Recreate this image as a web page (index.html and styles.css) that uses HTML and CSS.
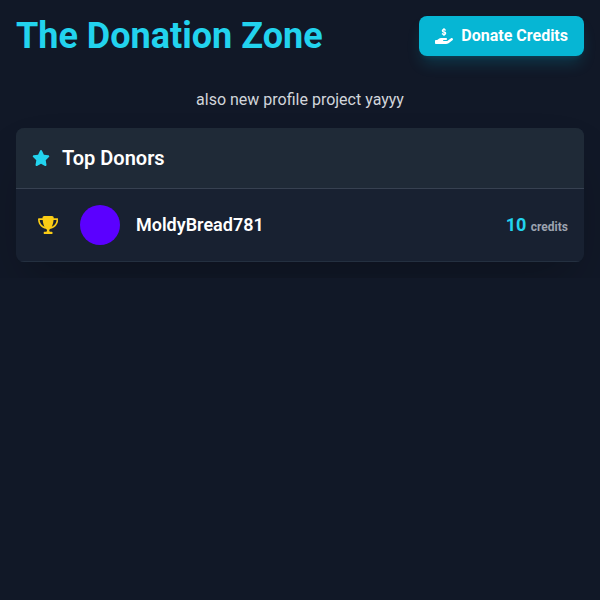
FILE: index.html
```html
<!DOCTYPE html>
<html lang="en">
<head>
  <meta charset="utf-8">
  <meta name="viewport" content="width=device-width, initial-scale=1">
  <title>The Donation Zone</title>
  <link rel="stylesheet" href="styles.css">
</head>
<body>
  <div class="page">
    <header class="page-header">
      <h1 class="page-title">The Donation Zone</h1>
      <button class="donate-button" type="button">
        <svg class="icon" viewBox="0 0 576 512" aria-hidden="true"><path d="M312 24V34.500c6.400 1.200 12.600 2.700 18.200 4.200c12.800 3.400 20.400 16.600 17 29.400s-16.600 20.400-29.400 17c-10.900-2.900-21.100-4.900-30.200-5c-7.300-.1-14.700 1.700-19.400 4.400c-2.100 1.300-3.100 2.400-3.500 3c-.3 .5-.7 1.200-.7 2.800c0 .3 0 .5 0 .6c.2 .2 .9 1.200 3.300 2.600c5.800 3.500 14.400 6.200 27.400 10.100l.9 .3c11.100 3.300 25.900 7.800 37.900 15.300c13.700 8.600 26.100 22.900 26.400 44.900c.3 22.500-11.400 38.900-26.700 48.500c-6.700 4.100-13.900 7-21.300 8.800V232c0 13.300-10.700 24-24 24s-24-10.700-24-24V220.600c-9.500-2.300-18.200-5.300-25.600-7.800c-2.100-.7-4.100-1.400-6-2c-12.600-4.200-19.400-17.800-15.200-30.400s17.800-19.400 30.400-15.200c2.600 .9 5 1.700 7.300 2.500c13.600 4.600 23.400 7.900 33.900 8.300c8 .3 15.100-1.600 19.200-4.100c1.900-1.200 2.800-2.200 3.200-2.900c.4-.6 .9-1.800 .8-4.100l0-.2c0-1 0-2.100-4-4.600c-5.700-3.600-14.300-6.400-27.100-10.300l-1.900-.6c-10.800-3.200-25-7.500-36.400-14.400c-13.500-8.100-26.500-22-26.600-44.100c-.1-22.900 12.900-38.600 27.700-47.400c6.400-3.800 13.300-6.400 20.200-8.200V24c0-13.300 10.700-24 24-24s24 10.700 24 24zM568.200 336.300c13.100 17.800 9.300 42.800-8.500 55.900L433.100 485.500c-23.400 17.200-51.600 26.500-80.700 26.500H192 32c-17.700 0-32-14.300-32-32V416c0-17.700 14.300-32 32-32H68.800l44.900-36c22.700-18.200 50.900-28 80-28H272h16 64c17.700 0 32 14.300 32 32s-14.300 32-32 32H288 272c-8.800 0-16 7.200-16 16s7.200 16 16 16H392.600l119.700-88.200c17.800-13.100 42.800-9.300 55.900 8.500z"/></svg>
        <span>Donate Credits</span>
      </button>
    </header>

    <main>
      <p class="notice">also new profile project yayyy</p>

      <section class="card" aria-labelledby="donors-title">
        <div class="card-header">
          <svg class="icon icon-star" viewBox="0 0 576 512" aria-hidden="true"><path d="M316.900 18C311.600 7 300.400 0 288.100 0s-23.400 7-28.800 18L195 150.300 51.400 171.500c-12 1.800-22 10.200-25.700 21.700s-.7 24.200 7.900 32.700L137.800 329 113.200 474.700c-2 12 3 24.200 12.900 31.300s23 8 33.800 2.300l128.300-68.500 128.300 68.500c10.800 5.700 23.900 4.900 33.800-2.300s14.900-19.300 12.900-31.300L438.500 329 542.700 225.900c8.600-8.500 11.700-21.200 7.900-32.700s-13.700-19.900-25.700-21.700L381.200 150.300 316.900 18z"/></svg>
          <h2 class="card-title" id="donors-title">Top Donors</h2>
        </div>
        <ol class="donors">
          <li class="donor">
            <span class="rank">
              <svg class="icon-trophy" viewBox="0 0 576 512" aria-hidden="true"><path d="M400 0H176c-26.500 0-48.100 21.800-47.100 48.200c.2 5.300 .4 10.600 .7 15.800H24C10.700 64 0 74.700 0 88c0 92.600 33.500 157 78.500 200.700c44.300 43.100 98.300 64.800 138.100 75.800c23.400 6.500 39.400 26 39.400 45.600c0 20.900-17 37.900-37.900 37.900H192c-17.700 0-32 14.300-32 32s14.300 32 32 32H384c17.700 0 32-14.300 32-32s-14.300-32-32-32H357.900C337 448 320 431 320 410.100c0-19.600 15.900-39.200 39.400-45.600c39.900-11 93.900-32.700 138.200-75.800C542.500 245 576 180.600 576 88c0-13.300-10.700-24-24-24H446.400c.3-5.200 .5-10.400 .7-15.800C448.100 21.800 426.500 0 400 0zM48.900 112h84.400c9.100 90.100 29.200 150.300 51.900 190.600c-24.900-11-50.800-26.500-73.200-48.300c-32-31.100-58-76-63-142.300zM464.100 254.300c-22.400 21.800-48.300 37.300-73.200 48.300c22.700-40.300 42.800-100.500 51.900-190.600h84.400c-5.100 66.300-31.100 111.200-63 142.300z"/></svg>
            </span>
            <span class="avatar"></span>
            <span class="donor-name">MoldyBread781</span>
            <span class="amount">10 <span class="unit">credits</span></span>
          </li>
        </ol>
      </section>
    </main>
  </div>
</body>
</html>
```
FILE: styles.css
```css
*,
*::before,
*::after {
  box-sizing: border-box;
}

body {
  margin: 0;
  background: #111827;
  color: #fff;
  font-family: Roboto, "Liberation Sans", sans-serif;
  font-size: 16px;
  line-height: 24px;
}

h1,
h2,
p,
ol {
  margin: 0;
  padding: 0;
}

.page {
  padding: 16px;
}

.page-header {
  display: flex;
  align-items: center;
  justify-content: space-between;
  margin-bottom: 32px;
}

.page-title {
  color: #22d3ee;
  font-size: 36px;
  font-weight: 700;
  line-height: 40px;
}

.donate-button {
  display: flex;
  align-items: center;
  gap: 8px;
  padding: 8px 16px;
  border: 0;
  border-radius: 8px;
  background: #06b6d4;
  color: #fff;
  font: inherit;
  font-weight: 700;
  cursor: pointer;
  box-shadow: 0 10px 15px -3px rgb(6 182 212 / 20%), 0 4px 6px -4px rgb(6 182 212 / 20%);
}

.icon {
  width: 18px;
  height: 16px;
  fill: currentColor;
  flex: none;
}

.notice {
  margin-bottom: 16px;
  color: #d1d5db;
  text-align: center;
}

.card {
  overflow: hidden;
  border-radius: 8px;
  background: #182131;
  box-shadow: 0 25px 50px -12px rgb(0 0 0 / 25%);
}

.card-header {
  display: flex;
  align-items: center;
  gap: 12px;
  padding: 16px;
  background: #1f2a37;
  border-bottom: 1px solid #374151;
}

.icon-star {
  color: #22d3ee;
}

.card-title {
  font-size: 20px;
  font-weight: 600;
  line-height: 28px;
}

.donors {
  list-style: none;
}

.donor {
  display: flex;
  align-items: center;
  gap: 16px;
  padding: 16px;
  border-bottom: 1px solid #243040;
}

.rank {
  display: flex;
  justify-content: center;
  width: 32px;
}

.icon-trophy {
  height: 18px;
  fill: #facc15;
}

.avatar {
  width: 40px;
  height: 40px;
  border-radius: 50%;
  background: #5b00ff;
}

.donor-name {
  flex: 1;
  font-size: 18px;
  font-weight: 600;
  line-height: 28px;
}

.amount {
  color: #22d3ee;
  font-size: 18px;
  font-weight: 700;
  line-height: 28px;
}

.unit {
  color: #9ca3af;
  font-size: 12px;
  line-height: 16px;
}
```
